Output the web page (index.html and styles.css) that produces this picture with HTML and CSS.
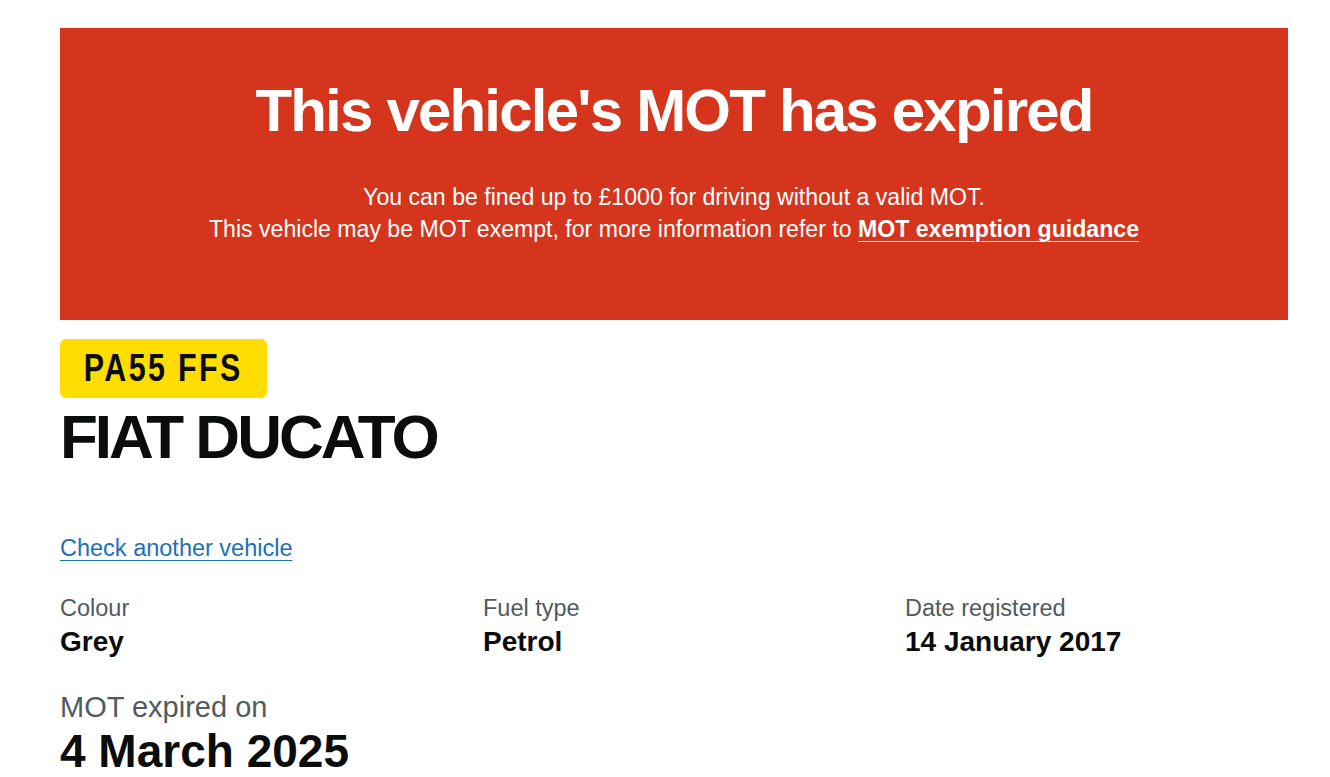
FILE: index.html
```html
<!DOCTYPE html>
<html lang="en">
<head>
    <meta charset="UTF-8">
    <meta name="viewport" content="width=device-width, initial-scale=1.0">
    <title>Check MOT history - FIAT DUCATO</title>
    <link rel="stylesheet" href="styles.css">
</head>
<body>
    <main class="page">
        <div class="mot-banner">
            <h1 class="mot-banner-title">This vehicle's MOT has expired</h1>
            <p class="mot-banner-text">You can be fined up to £1000 for driving without a valid MOT.</p>
            <p class="mot-banner-text">This vehicle may be MOT exempt, for more information refer to <a href="#" class="mot-banner-link">MOT exemption guidance</a></p>
        </div>

        <div class="reg-plate"><span class="reg-plate-text">PA55 FFS</span></div>
        <h2 class="vehicle-name">FIAT DUCATO</h2>

        <p class="check-link-wrap"><a href="#" class="check-link">Check another vehicle</a></p>

        <dl class="vehicle-details">
            <div class="detail">
                <dt class="detail-label">Colour</dt>
                <dd class="detail-value">Grey</dd>
            </div>
            <div class="detail">
                <dt class="detail-label">Fuel type</dt>
                <dd class="detail-value">Petrol</dd>
            </div>
            <div class="detail">
                <dt class="detail-label">Date registered</dt>
                <dd class="detail-value">14 January 2017</dd>
            </div>
        </dl>

        <div class="expiry">
            <p class="expiry-label">MOT expired on</p>
            <p class="expiry-date">4 March 2025</p>
        </div>
    </main>
</body>
</html>
```

FILE: styles.css
```css
* {
    margin: 0;
    padding: 0;
    box-sizing: border-box;
}
body {
    font-family: 'Liberation Sans', Arial, sans-serif;
    color: #0b0c0c;
    background-color: #ffffff;
}
.page {
    margin: 0 42px 0 60px;
    padding-top: 28px;
}
.mot-banner {
    background-color: #d4351c;
    color: #ffffff;
    text-align: center;
    padding: 53px 20px 75px;
}
.mot-banner-title {
    font-size: 60px;
    line-height: 60px;
    font-weight: bold;
    letter-spacing: -1.8px;
    margin-bottom: 40px;
}
.mot-banner-text {
    font-size: 23.1px;
    line-height: 32px;
}
.mot-banner-link {
    color: #ffffff;
    font-weight: bold;
    text-decoration: underline;
    text-decoration-thickness: 1px;
    text-underline-offset: 0.16em;
}
.reg-plate {
    display: flex;
    justify-content: center;
    align-items: center;
    margin-top: 19px;
    width: 207px;
    height: 59px;
    background-color: #ffdd00;
    border-radius: 6px;
    overflow: hidden;
}
.reg-plate-text {
    display: inline-block;
    font-size: 38px;
    line-height: 59px;
    font-weight: bold;
    letter-spacing: 3px;
    color: #0b0c0c;
    white-space: nowrap;
    transform: scaleX(0.8);
}
.vehicle-name {
    margin-top: 8px;
    font-size: 62px;
    line-height: 62px;
    font-weight: bold;
    letter-spacing: -3px;
}
.check-link-wrap {
    margin-top: 64px;
    font-size: 23.5px;
    line-height: 32px;
}
.check-link {
    color: #1d70b8;
    text-decoration: underline;
    text-decoration-thickness: 1px;
    text-underline-offset: 0.16em;
}
.vehicle-details {
    display: grid;
    grid-template-columns: 423px 422px 1fr;
    margin-top: 28px;
}
.detail-label {
    font-size: 23.5px;
    line-height: 32px;
    color: #505a5f;
}
.detail-value {
    font-size: 28px;
    line-height: 36px;
    font-weight: bold;
}
.expiry {
    margin-top: 29px;
}
.expiry-label {
    font-size: 29px;
    line-height: 36px;
    color: #505a5f;
}
.expiry-date {
    margin-top: 1px;
    font-size: 46px;
    line-height: 50px;
    font-weight: bold;
}
```
